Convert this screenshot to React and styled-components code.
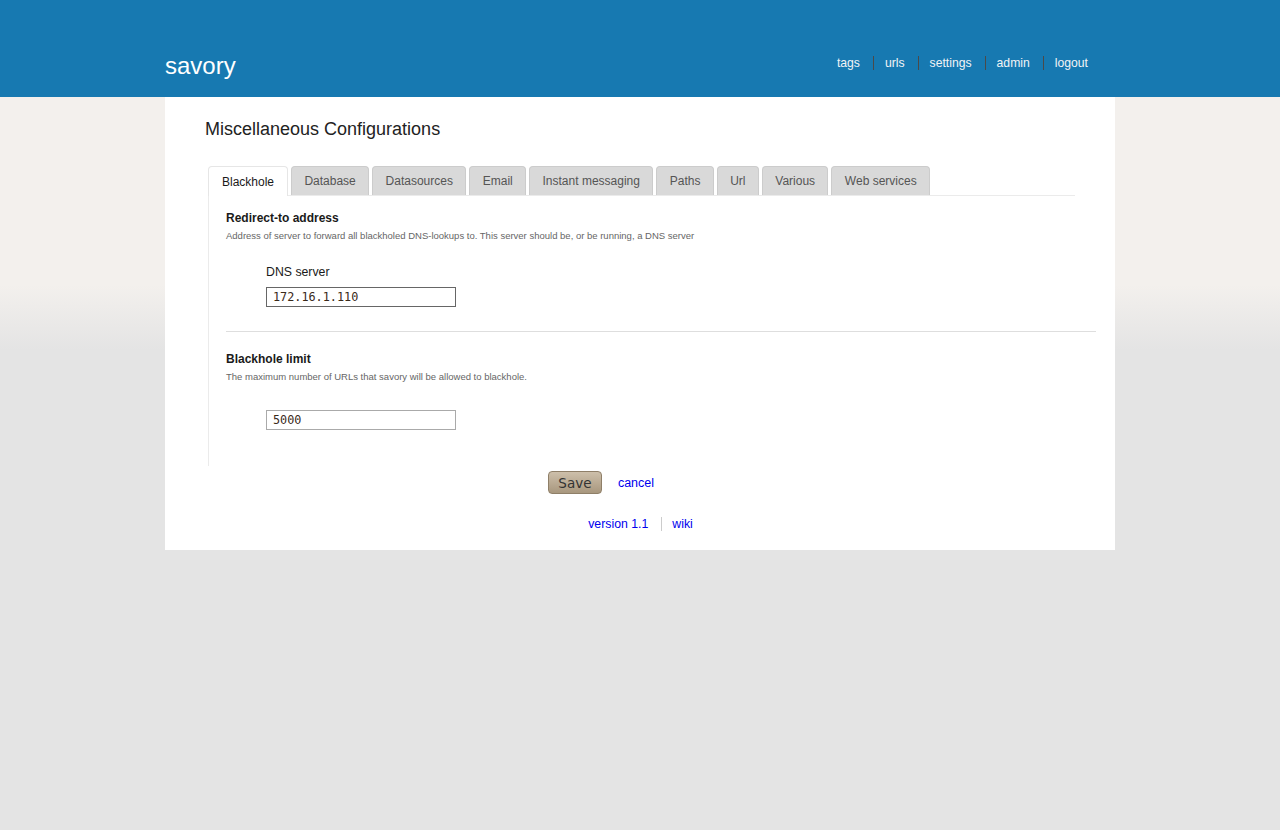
import React from "react";
import styled, { createGlobalStyle } from "styled-components";

const GlobalStyle = createGlobalStyle`
  html, body {
    margin: 0;
    padding: 0;
  }
  body {
    font-family: "Liberation Sans", Arial, sans-serif;
    min-height: 830px;
    background: linear-gradient(
      to bottom,
      #1779b1 0px,
      #1779b1 97px,
      #f3f0ed 97px,
      #f3f0ed 285px,
      #e4e4e4 350px,
      #e4e4e4 100%
    );
  }
`;

const tabs = [
  "Blackhole",
  "Database",
  "Datasources",
  "Email",
  "Instant messaging",
  "Paths",
  "Url",
  "Various",
  "Web services",
];

const navLinks = ["tags", "urls", "settings", "admin", "logout"];

const App = () => {
  return (
    <>
      <GlobalStyle />
      <Header>
        <HeaderInner>
          <Logo>savory</Logo>
          <Nav>
            {navLinks.map((link, i) => (
              <NavLink key={link} first={i === 0}>
                {link}
              </NavLink>
            ))}
          </Nav>
        </HeaderInner>
      </Header>
      <Page>
        <Title>Miscellaneous Configurations</Title>
        <TabBar>
          {tabs.map((tab, i) => (
            <Tab key={tab} active={i === 0}>
              {tab}
            </Tab>
          ))}
        </TabBar>
        <TabPanel>
          <Section>
            <SectionTitle>Redirect-to address</SectionTitle>
            <SectionDesc>
              Address of server to forward all blackholed DNS-lookups to. This
              server should be, or be running, a DNS server
            </SectionDesc>
            <Field>
              <FieldLabel>DNS server</FieldLabel>
              <Input defaultValue="172.16.1.110" dark />
            </Field>
          </Section>
          <Separator />
          <Section>
            <SectionTitle>Blackhole limit</SectionTitle>
            <SectionDesc>
              The maximum number of URLs that savory will be allowed to
              blackhole.
            </SectionDesc>
            <Field spaced>
              <Input defaultValue="5000" />
            </Field>
          </Section>
        </TabPanel>
        <Actions>
          <SaveButton>Save</SaveButton>
          <Link href="#">cancel</Link>
        </Actions>
        <Footer>
          <FooterLink href="#">version 1.1</FooterLink>
          <FooterLink href="#" divided>
            wiki
          </FooterLink>
        </Footer>
      </Page>
    </>
  );
};

const Header = styled.header`
  height: 97px;
  background-color: #1779b1;
`;

const HeaderInner = styled.div`
  width: 950px;
  height: 100%;
  margin: 0 auto;
  display: flex;
  align-items: flex-end;
  justify-content: space-between;
  box-sizing: border-box;
  padding: 0 27px 17px 0;
`;

const Logo = styled.div`
  color: #ffffff;
  font-size: 24px;
  line-height: 28px;
`;

const Nav = styled.nav`
  display: flex;
  align-items: center;
  margin-bottom: 10px;
`;

const NavLink = styled.a`
  color: #f2f4f6;
  font-size: 12.2px;
  line-height: 14px;
  padding: 0 13px 0 11px;
  border-left: ${(p) => (p.first ? "none" : "1px solid #4a4a4a")};
  cursor: pointer;
  &:last-child {
    padding-right: 0;
  }
`;

const Page = styled.main`
  width: 950px;
  margin: 0 auto;
  background-color: #ffffff;
  box-sizing: border-box;
  padding: 19px 19px 19px 40px;
`;

const Title = styled.h1`
  margin: 0;
  font-size: 18px;
  font-weight: normal;
  color: #222;
  line-height: 26px;
`;

const TabBar = styled.div`
  display: flex;
  gap: 3px;
  margin: 24px 21px 0 3px;
  border-bottom: 1px solid #ebebeb;
  height: 29px;
`;

const Tab = styled.div`
  box-sizing: border-box;
  height: ${(p) => (p.active ? "30px" : "29px")};
  padding: 0 ${(p) => (p.active ? "13px" : "12.4px")};
  display: flex;
  align-items: center;
  font-size: 12px;
  color: ${(p) => (p.active ? "#1a1a1a" : "#555")};
  background-color: ${(p) => (p.active ? "#ffffff" : "#d9d9d9")};
  border: 1px solid ${(p) => (p.active ? "#e6e6e6" : "#cccccc")};
  border-bottom: none;
  border-radius: 4px 4px 0 0;
  cursor: pointer;
`;

const TabPanel = styled.div`
  margin-left: 3px;
  border-left: 1px solid #ebebeb;
  padding: 15px 0 36px 17px;
`;

const Section = styled.section``;

const SectionTitle = styled.h3`
  margin: 0;
  font-size: 12px;
  font-weight: bold;
  line-height: 14px;
  color: #1a1a1a;
`;

const SectionDesc = styled.p`
  margin: 5px 0 0;
  font-size: 9.5px;
  line-height: 12px;
  color: #666;
`;

const Field = styled.div`
  display: flex;
  flex-direction: column;
  align-items: flex-start;
  padding-left: 40px;
  margin-top: ${(p) => (p.spaced ? "27px" : "23px")};
`;

const FieldLabel = styled.label`
  font-size: 12.3px;
  line-height: 14px;
  color: #1a1a1a;
  margin-bottom: 8px;
`;

const Input = styled.input`
  box-sizing: border-box;
  width: 190px;
  height: 20px;
  margin: 0;
  padding: 0 6px;
  font-family: "DejaVu Sans Mono", monospace;
  font-size: 11.8px;
  color: #3a2a1a;
  border: 1px solid ${(p) => (p.dark ? "#666" : "#aaa")};
  border-radius: 0;
  outline: none;
`;

const Separator = styled.hr`
  border: none;
  border-top: 1px solid #dedede;
  margin: 24px 0 20px;
`;

const Actions = styled.div`
  display: flex;
  justify-content: center;
  align-items: center;
  gap: 16px;
  margin-top: 5px;
  padding-right: 99px;
`;

const SaveButton = styled.button`
  box-sizing: border-box;
  width: 54px;
  height: 23px;
  font-family: "DejaVu Sans", sans-serif;
  font-size: 13.5px;
  color: #333;
  background: linear-gradient(to bottom, #cdbfaa, #a8977e);
  border: 1px solid #8f7f68;
  border-radius: 4px;
  padding: 0;
  cursor: pointer;
`;

const Link = styled.a`
  color: #0000ee;
  font-size: 12.5px;
  text-decoration: none;
`;

const Footer = styled.footer`
  display: flex;
  justify-content: center;
  margin-top: 23px;
  padding-right: 20px;
`;

const FooterLink = styled.a`
  color: #0000ee;
  font-size: 12.3px;
  line-height: 14px;
  text-decoration: none;
  padding: 0 ${(p) => (p.divided ? "0" : "13px")} 0
    ${(p) => (p.divided ? "10px" : "0")};
  border-left: ${(p) => (p.divided ? "1px solid #ccc" : "none")};
`;

export default App;
